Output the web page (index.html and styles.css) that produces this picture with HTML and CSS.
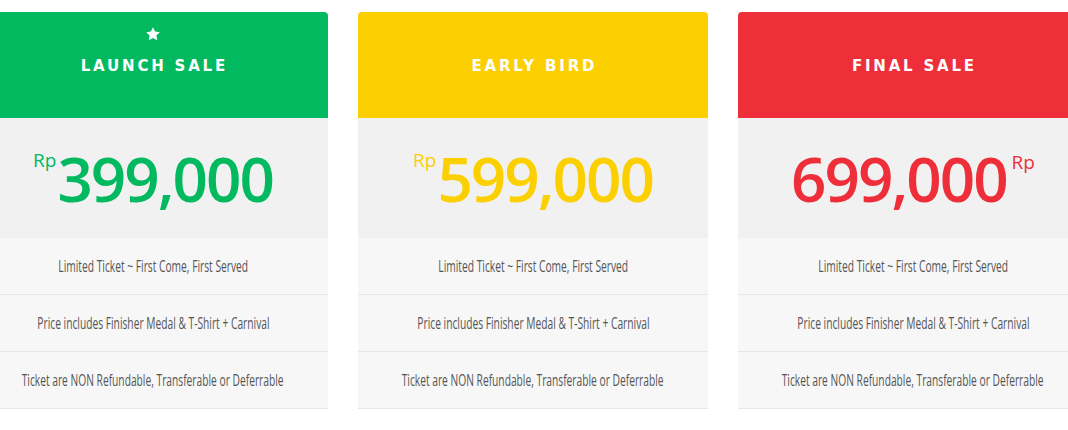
FILE: index.html
```html
<!DOCTYPE html>
<html lang="en">
<head>
<meta charset="utf-8">
<title>Pricing</title>
<link rel="stylesheet" href="styles.css">
</head>
<body>
<div class="cards">
  <section class="card card-green">
    <header class="card-head">
      <svg class="star" viewBox="0 0 24 24" width="16" height="16" aria-hidden="true"><path d="M12 1.8l3.1 6.6 7.2.9-5.3 5 1.4 7.1L12 17.9l-6.4 3.5 1.4-7.1-5.3-5 7.2-.9z" fill="#fff"/></svg>
      <h2 class="title">LAUNCH SALE</h2>
    </header>
    <div class="price"><span class="cur">Rp</span><span class="amount">399,000</span></div>
    <ul class="features">
      <li><span class="ft">Limited Ticket ~ First Come, First Served</span></li>
      <li><span class="ft">Price includes Finisher Medal &amp; T-Shirt + Carnival</span></li>
      <li><span class="ft">Ticket are NON Refundable, Transferable or Deferrable</span></li>
    </ul>
  </section>
  <section class="card card-yellow">
    <header class="card-head">
      <h2 class="title">EARLY BIRD</h2>
    </header>
    <div class="price"><span class="cur">Rp</span><span class="amount">599,000</span></div>
    <ul class="features">
      <li><span class="ft">Limited Ticket ~ First Come, First Served</span></li>
      <li><span class="ft">Price includes Finisher Medal &amp; T-Shirt + Carnival</span></li>
      <li><span class="ft">Ticket are NON Refundable, Transferable or Deferrable</span></li>
    </ul>
  </section>
  <section class="card card-red">
    <header class="card-head">
      <h2 class="title">FINAL SALE</h2>
    </header>
    <div class="price"><span class="amount">699,000</span><span class="cur cur-after">Rp</span></div>
    <ul class="features">
      <li><span class="ft">Limited Ticket ~ First Come, First Served</span></li>
      <li><span class="ft">Price includes Finisher Medal &amp; T-Shirt + Carnival</span></li>
      <li><span class="ft">Ticket are NON Refundable, Transferable or Deferrable</span></li>
    </ul>
  </section>
</div>
</body>
</html>
```
FILE: styles.css
```css
html, body {
  margin: 0;
  padding: 0;
  background: #fff;
  overflow: hidden;
}
body {
  font-family: "Open Sans", "DejaVu Sans", sans-serif;
}
.cards {
  display: flex;
  gap: 30px;
  margin-left: -22px;
  padding-top: 12px;
}
.card {
  flex: 0 0 350px;
  width: 350px;
  min-width: 0;
}
.card-head {
  position: relative;
  height: 106px;
  display: flex;
  align-items: center;
  justify-content: center;
  border-radius: 4px 4px 0 0;
}
.card-green .card-head { background: #03b960; }
.card-yellow .card-head { background: #fcd000; }
.card-red .card-head { background: #ee2f3a; }
.card-green .price { color: #03b960; }
.card-yellow .price { color: #fcd000; }
.card-red .price { color: #ee2f3a; }
.star {
  position: absolute;
  top: 14px;
  left: 50%;
  margin-left: -8px;
}
.title {
  margin: 0;
  font-family: "DejaVu Sans", sans-serif;
  font-weight: 700;
  font-size: 15px;
  letter-spacing: 2.8px;
  color: #fff;
  line-height: 1;
  padding-left: 2.8px;
  padding-top: 3px;
}
.price {
  height: 120px;
  background: #f1f1f2;
  display: flex;
  align-items: center;
  justify-content: center;
}
.amount {
  font-family: "Open Sans", sans-serif;
  font-weight: 600;
  font-size: 62px;
  line-height: 1;
  letter-spacing: -2px;
}
.cur {
  align-self: flex-start;
  margin-top: 33px;
  font-family: "Open Sans", sans-serif;
  font-weight: 500;
  font-size: 19px;
  line-height: 1;
  margin-right: 1px;
}
.cur-after {
  margin-left: 5px;
  margin-top: 35px;
  margin-right: 0;
}
.features {
  list-style: none;
  margin: 0;
  padding: 0;
}
.features li {
  height: 56px;
  border-bottom: 1px solid #e6e6e6;
  background: #f7f7f7;
  display: flex;
  align-items: center;
  justify-content: center;
  overflow: hidden;
}
.ft {
  display: inline-block;
  font-family: "Open Sans", sans-serif;
  font-weight: 400;
  font-size: 16px;
  color: #555;
  white-space: nowrap;
  transform: scaleX(0.64);
}
```
